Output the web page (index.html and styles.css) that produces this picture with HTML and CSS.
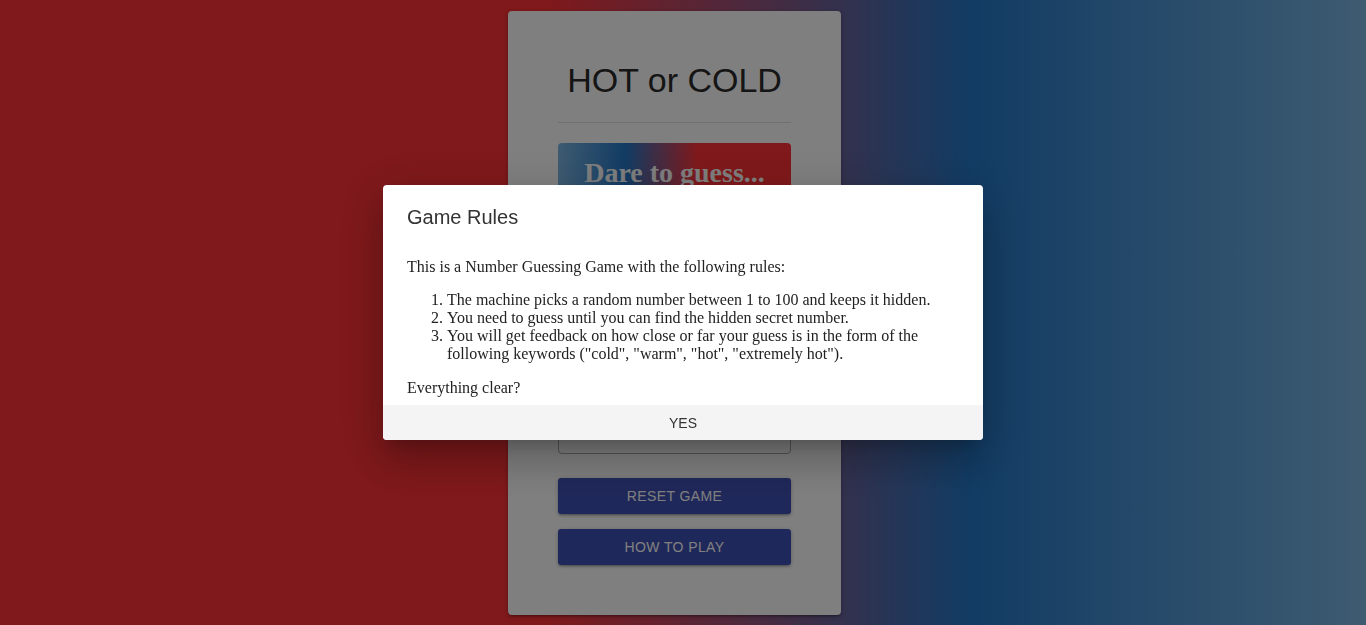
FILE: index.html
```html
<!DOCTYPE html>
<html lang="en">
<head>
<meta charset="utf-8">
<title>HOT or COLD</title>
<link rel="stylesheet" href="styles.css">
</head>
<body>
<main class="page">
  <section class="card">
    <h1 class="title">HOT or COLD</h1>
    <hr class="divider">
    <div class="dare">Dare to guess...</div>
    <div class="status"></div>
    <input class="guess-input" type="number" aria-label="Your guess">
    <button class="btn btn-first">RESET GAME</button>
    <button class="btn">HOW TO PLAY</button>
  </section>
</main>

<div class="overlay">
  <div class="modal">
    <div class="modal-content">
      <h4 class="modal-title">Game Rules</h4>
      <p class="modal-text">This is a Number Guessing Game with the following rules:</p>
      <ol class="rules">
        <li>The machine picks a random number between 1 to 100 and keeps it hidden.</li>
        <li>You need to guess until you can find the hidden secret number.</li>
        <li>You will get feedback on how close or far your guess is in the form of the following keywords ("cold", "warm", "hot", "extremely hot").</li>
      </ol>
      <p class="modal-text">Everything clear?</p>
    </div>
    <div class="modal-footer">
      <button class="modal-btn">YES</button>
    </div>
  </div>
</div>
</body>
</html>
```

FILE: styles.css
```css
html, body {
  margin: 0;
  padding: 0;
  height: 625px;
  overflow: hidden;
}

body {
  font-family: "Liberation Serif", "Times New Roman", serif;
  background: linear-gradient(to right, #ff3236 40%, #2478c8 71%, #7cb6e2 100%);
}

.page {
  display: flex;
  justify-content: center;
  padding-top: 11px;
  padding-right: 17px;
}

.card {
  width: 233px;
  background: #ffffff;
  border-radius: 4px;
  padding: 50px 50px 50px;
  display: flex;
  flex-direction: column;
  box-shadow: 0 2px 2px rgba(0,0,0,.14), 0 3px 1px -2px rgba(0,0,0,.12), 0 1px 5px rgba(0,0,0,.2);
}

.title {
  margin: 0;
  font-family: "Liberation Sans", Arial, sans-serif;
  font-weight: 400;
  font-size: 34px;
  line-height: 39px;
  color: #2a2a2a;
  text-align: center;
}

.divider {
  margin: 22px 0 20px;
  border: 0;
  border-top: 1px solid #e0e0e0;
  height: 0;
}

.dare {
  height: 59px;
  padding-top: 1px;
  border-radius: 4px;
  background: linear-gradient(to left, #ff3236 40%, #2478c8 71%, #7cb6e2 100%);
  color: #ffffff;
  font-family: "Liberation Serif", "Times New Roman", serif;
  font-weight: 700;
  font-size: 28px;
  line-height: 58px;
  text-align: center;
}

.status {
  height: 203px;
}

.guess-input {
  box-sizing: border-box;
  height: 48px;
  width: 100%;
  margin: 0;
  border: 1px solid #a8a8a8;
  border-radius: 4px;
  background: #ffffff;
}

.btn {
  height: 36px;
  margin-top: 15px;
  border: 0;
  border-radius: 3px;
  background: #3f51b5;
  color: #ffffff;
  font-family: "Liberation Sans", Arial, sans-serif;
  font-size: 14px;
  letter-spacing: 0.4px;
  box-shadow: 0 2px 2px rgba(0,0,0,.14), 0 3px 1px -2px rgba(0,0,0,.12), 0 1px 5px rgba(0,0,0,.2);
}

.btn-first {
  margin-top: 24px;
}

.overlay {
  position: fixed;
  inset: 0;
  background: rgba(0, 0, 0, 0.5);
  display: flex;
  align-items: center;
  justify-content: center;
}

.modal {
  width: 600px;
  background: #ffffff;
  border-radius: 4px;
  overflow: hidden;
  box-shadow: 0 24px 38px 3px rgba(0,0,0,.14), 0 9px 46px 8px rgba(0,0,0,.12), 0 11px 15px -7px rgba(0,0,0,.2);
}

.modal-content {
  padding: 21px 24px 8px;
  color: #222;
}

.modal-title {
  margin: 0 0 29px;
  font-family: "Liberation Sans", Arial, sans-serif;
  font-weight: 400;
  font-size: 20px;
  line-height: 23px;
  color: #333;
}

.modal-text {
  margin: 0;
  font-size: 16px;
  line-height: 18px;
}

.rules {
  margin: 15px 0 16px;
  padding-left: 40px;
  font-size: 16px;
  line-height: 18px;
}

.modal-footer {
  height: 35px;
  background: #f4f4f4;
  display: flex;
  align-items: center;
  justify-content: center;
}

.modal-btn {
  border: 0;
  background: transparent;
  font-family: "Liberation Sans", Arial, sans-serif;
  font-size: 14px;
  color: #333;
  padding: 0;
}
```
